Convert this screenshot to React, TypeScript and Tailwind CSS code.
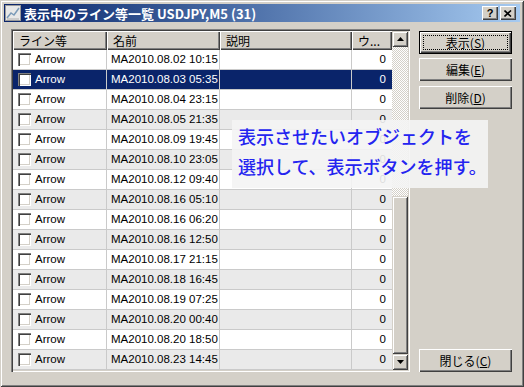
const rows = [
  "08.02 10:15",
  "08.03 05:35",
  "08.04 23:15",
  "08.05 21:35",
  "08.09 19:45",
  "08.10 23:05",
  "08.12 09:40",
  "08.16 05:10",
  "08.16 06:20",
  "08.16 12:50",
  "08.17 21:15",
  "08.18 16:45",
  "08.19 07:25",
  "08.20 00:40",
  "08.20 18:50",
  "08.23 14:45",
];

const raised =
  "bg-[#d4d0c8] shadow-[inset_1px_1px_0_#d4d0c8,inset_-1px_-1px_0_#404040,inset_2px_2px_0_#fff,inset_-2px_-2px_0_#808080]";
const btnRaised =
  "bg-[#d4d0c8] shadow-[inset_1px_1px_0_#fff,inset_-1px_-1px_0_#404040,inset_-2px_-2px_0_#808080]";

const jp = { fontFamily: '"Noto Sans CJK JP", "Noto Sans", sans-serif' };
const tahoma = { fontFamily: '"Liberation Sans", Arial, sans-serif' };

const Header = ({ w, label }: { w: string; label: string }) => (
  <div
    className={`${w} h-[19px] flex items-center pl-[6px] text-[12px] leading-none text-black shrink-0 ${btnRaised}`}
    style={jp}
  >
    {label}
  </div>
);

const Check = () => (
  <div className="w-[13px] h-[13px] bg-white shrink-0 shadow-[inset_1px_1px_0_#808080,inset_2px_2px_0_#404040,inset_-1px_-1px_0_#fff,inset_-2px_-2px_0_#d4d0c8]" />
);

const Btn = ({
  label,
  k,
  def,
  className = "",
}: {
  label: string;
  k: string;
  def?: boolean;
  className?: string;
}) => (
  <div
    className={`w-[93px] h-[23px] relative flex items-center justify-center text-[12px] text-black ${className} ${
      def
        ? "bg-[#d4d0c8] shadow-[inset_0_0_0_1px_#000,inset_2px_2px_0_#fff,inset_-2px_-2px_0_#404040,inset_-3px_-3px_0_#808080]"
        : btnRaised
    }`}
    style={jp}
  >
    {def && <div className="absolute inset-[4px] border border-dotted border-black" />}
    <span>
      {label}(<span className="underline">{k}</span>)
    </span>
  </div>
);

export default function App() {
  return (
    <div className="relative w-[524px] h-[387px] bg-[#d4d0c8] p-[4px] flex flex-col shadow-[inset_1px_1px_0_#d4d0c8,inset_-1px_-1px_0_#404040,inset_2px_2px_0_#fff,inset_-2px_-2px_0_#808080]">
      {/* title bar */}
      <div className="h-[18px] flex items-center bg-gradient-to-r from-[#0a246a] to-[#a6caf0] pl-[1px] pr-[4px]">
        <svg width="16" height="16" viewBox="0 0 16 16" className="shrink-0">
          <rect x="0.5" y="0.5" width="15" height="15" fill="#e8e8e8" stroke="#9a9a9a" />
          <path d="M2 13 L6 8 L9 10 L14 3" stroke="#7a9ab8" strokeWidth="1.5" fill="none" />
          <path d="M2 14 L14 14" stroke="#b0b0b0" />
        </svg>
        <span className="ml-[3px] text-white font-bold text-[13px] leading-none whitespace-nowrap" style={jp}>
          表示中のライン等一覧 USDJPY,M5 (31)
        </span>
        <div className="flex-1" />
        <div className={`w-[16px] h-[14px] ${btnRaised} flex items-center justify-center text-[11px] font-bold leading-none text-black`} style={tahoma}>
          ?
        </div>
        <div className={`ml-[2px] w-[16px] h-[14px] ${btnRaised} flex items-center justify-center`}>
          <svg width="8" height="7" viewBox="0 0 8 7">
            <path d="M0.5 0.5 L7 6.5 M7 0.5 L0.5 6.5" stroke="#000" strokeWidth="1.6" />
          </svg>
        </div>
      </div>

      {/* body */}
      <div className="flex pt-[7px] pl-[7px]">
        <div className="w-[399px] h-[343px] p-[2px] bg-white flex shadow-[inset_1px_1px_0_#808080,inset_2px_2px_0_#404040,inset_-1px_-1px_0_#fff,inset_-2px_-2px_0_#d4d0c8]">
          <div className="w-[379px] flex flex-col">
            <div className="flex">
              <Header w="w-[94px]" label="ライン等" />
              <Header w="w-[113px]" label="名前" />
              <Header w="w-[132px]" label="説明" />
              <Header w="w-[40px]" label="ウ..." />
            </div>
            {rows.map((r, i) => {
              const sel = i === 1;
              const bg = sel ? "bg-[#0a246a] text-white" : i % 2 ? "bg-[#eaeaea] text-black" : "bg-white text-black";
              return (
                <div key={r} className={`flex h-[20px] border-b border-[#cacaca] text-[11.5px] leading-none ${bg}`} style={tahoma}>
                  <div className="w-[94px] shrink-0 flex items-center pl-[5px] border-r border-[#cacaca]">
                    <Check />
                    <span className="ml-[4px]">Arrow</span>
                  </div>
                  <div className="w-[113px] shrink-0 flex items-center pl-[4px] border-r border-[#cacaca]">
                    MA2010.{r}
                  </div>
                  <div className="w-[132px] shrink-0 border-r border-[#cacaca]" />
                  <div className="w-[40px] shrink-0 flex items-center justify-end pr-[6px]">0</div>
                </div>
              );
            })}
          </div>
          {/* scrollbar */}
          <div className="w-[16px] flex flex-col">
            <div className={`h-[16px] ${raised} flex items-center justify-center`}>
              <svg width="7" height="4" viewBox="0 0 7 4">
                <path d="M3.5 0 L7 4 L0 4 Z" fill="#000" />
              </svg>
            </div>
            <div className="flex-1 bg-[repeating-conic-gradient(#d4d0c8_0_25%,#fff_0_50%)] bg-[length:2px_2px]" />
            <div className={`h-[158px] ${raised}`} />
            <div className={`h-[16px] ${raised} flex items-center justify-center`}>
              <svg width="7" height="4" viewBox="0 0 7 4">
                <path d="M0 0 L7 0 L3.5 4 Z" fill="#000" />
              </svg>
            </div>
          </div>
        </div>

        <div className="ml-[9px] flex flex-col">
          <Btn label="表示" k="S" def className="mt-[2px]" />
          <Btn label="編集" k="E" className="mt-[4px]" />
          <Btn label="削除" k="D" className="mt-[5px]" />
          <div className="flex-1" />
          <Btn label="閉じる" k="C" />
        </div>
      </div>

      {/* annotation overlay */}
      <div
        className="absolute left-[232px] top-[120px] w-[256px] h-[68px] bg-[#f4f4f4]/90 pl-[6px] pt-[1px] text-[18px] font-medium leading-[30px] text-[#2424f0] whitespace-nowrap"
        style={jp}
      >
        <div>表示させたいオブジェクトを</div>
        <div>選択して、表示ボタンを押す。</div>
      </div>
    </div>
  );
}
